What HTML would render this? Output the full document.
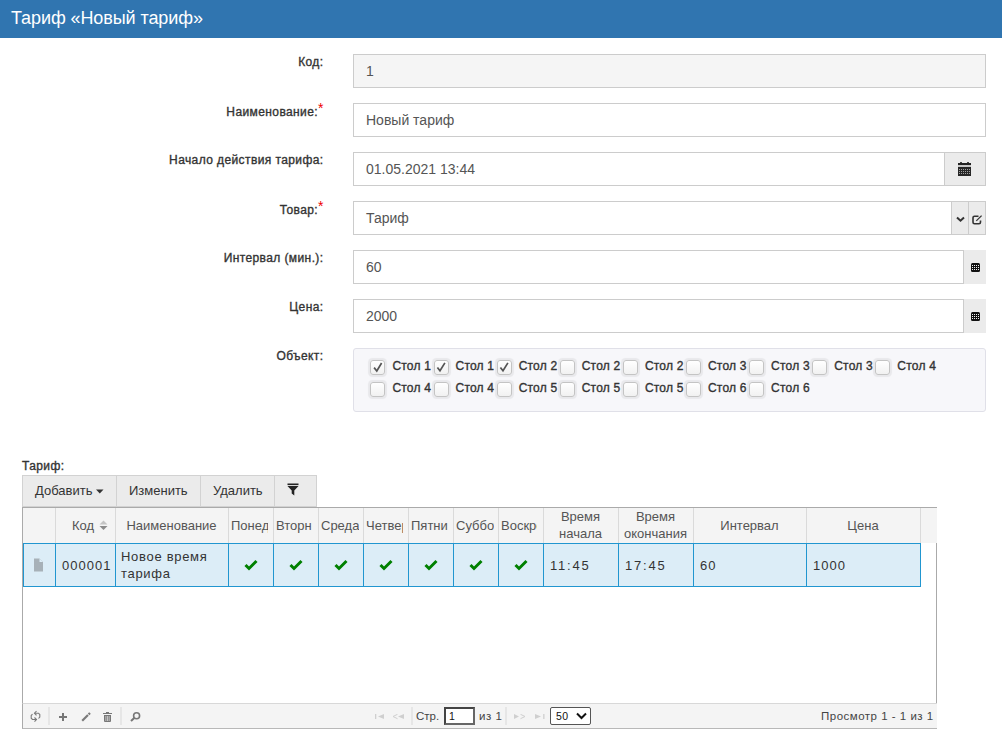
<!DOCTYPE html>
<html><head><meta charset="utf-8">
<style>
*{box-sizing:border-box;margin:0;padding:0}
html,body{width:1002px;height:749px;overflow:hidden;background:#fff;font-family:"Liberation Sans",sans-serif;color:#333}
.abs{position:absolute}
#hdr{left:0;top:0;width:1002px;height:38px;background:#3075b0;color:#fff;font-size:18px;line-height:36px;letter-spacing:-0.09px;padding-left:11px;}
.lbl{position:absolute;right:678.5px;font-size:12px;color:#333;letter-spacing:0.4px;-webkit-text-stroke:0.35px #333;white-space:nowrap;line-height:14px}
.req{color:#e00;-webkit-text-stroke:0;letter-spacing:0;position:relative;top:-3px;font-size:14px;margin-left:0px}
.inp{position:absolute;left:353px;height:34px;border:1px solid #ccc;background:#fff;font-size:14px;color:#555;padding-left:12px;line-height:32px}
.addon{position:absolute;height:34px;background:#ebebeb;border:1px solid #ccc}
.panel{position:absolute;left:353px;top:348px;width:633px;height:64px;background:#f7f7fa;border:1px solid #e0e0e8;border-radius:3px}
.cb{position:absolute;width:15px;height:15px;border:1px solid #c4c4c4;border-radius:3px;background:linear-gradient(#fff,#f1f1f1);box-shadow:0 0 1px 1.5px rgba(0,0,0,0.06)}
.cbt{position:absolute;font-size:12px;color:#333;letter-spacing:0.2px;-webkit-text-stroke:0.35px #333;line-height:12px;white-space:nowrap}
.tb{position:absolute;top:475px;height:32px;background:#ebebeb;border:1px solid #d2d2d2;font-size:13px;color:#333;line-height:30px;white-space:nowrap}
.gh{position:absolute;top:508px;height:35px;font-size:13px;color:#555;text-align:center;overflow:hidden;white-space:nowrap;line-height:35px}
.gc{position:absolute;top:543px;height:44px;background:#dcecf6;border:1px solid #2a93c8;border-left:none;font-size:12px;color:#333;overflow:hidden;white-space:nowrap}
.gh2{position:absolute;top:508px;height:35px;font-size:13px;color:#555;text-align:center;line-height:16.5px;padding-top:1px;white-space:nowrap;overflow:hidden}
.gr{position:absolute;font-size:13px;color:#333;letter-spacing:0.7px;white-space:nowrap;line-height:14px}
.ft{position:absolute;font-size:11.5px;color:#444;line-height:13px;white-space:nowrap}
.gfoot{position:absolute;left:22px;top:703px;width:915px;height:26px;background:#f4f4f4;border-top:1px solid #d8d8d8;border-bottom:1px solid #b8b8b8;border-left:1px solid #aaa}
</style></head><body>
<div id="hdr" class="abs">Тариф «Новый тариф»</div>

<div class="lbl" style="top:55px">Код:</div>
<div class="inp" style="top:54px;width:633px;background:#f5f5f5">1</div>

<div class="lbl" style="top:104px">Наименование:<span class="req">*</span></div>
<div class="inp" style="top:103px;width:633px">Новый тариф</div>

<div class="lbl" style="top:153px">Начало действия тарифа:</div>
<div class="inp" style="top:152px;width:592px">01.05.2021 13:44</div>
<div class="addon" style="left:944px;top:152px;width:42px"></div>

<div class="lbl" style="top:202px">Товар:<span class="req">*</span></div>
<div class="inp" style="top:201px;width:599px">Тариф</div>
<div class="addon" style="left:951px;top:201px;width:18px"></div>
<div class="addon" style="left:968px;top:201px;width:18px"></div>

<div class="lbl" style="top:251px">Интервал (мин.):</div>
<div class="inp" style="top:250px;width:611px">60</div>
<div class="addon" style="left:964px;top:250px;width:22px;border:none"></div>

<div class="lbl" style="top:300px">Цена:</div>
<div class="inp" style="top:299px;width:611px">2000</div>
<div class="addon" style="left:964px;top:299px;width:22px;border:none"></div>

<div class="lbl" style="top:349px">Объект:</div>
<div class="panel"></div>
<div class="cb" style="left:370.40px;top:360px"><svg width="13" height="13" viewBox="0 0 13 13" style="position:absolute;left:0;top:0"><path d="M3.1,6.6 L5.8,10 L10.6,2" fill="none" stroke="#555" stroke-width="1.7"/></svg></div><div class="cbt" style="left:392.40px;top:360px">Стол 1</div><div class="cb" style="left:433.52px;top:360px"><svg width="13" height="13" viewBox="0 0 13 13" style="position:absolute;left:0;top:0"><path d="M2.4,6.4 L5,9.8 L9.9,1.9" fill="none" stroke="#555" stroke-width="1.7"/></svg></div><div class="cbt" style="left:455.52px;top:360px">Стол 1</div><div class="cb" style="left:496.64px;top:360px"><svg width="13" height="13" viewBox="0 0 13 13" style="position:absolute;left:0;top:0"><path d="M2.4,6.4 L5,9.8 L9.9,1.9" fill="none" stroke="#555" stroke-width="1.7"/></svg></div><div class="cbt" style="left:518.64px;top:360px">Стол 2</div><div class="cb" style="left:559.76px;top:360px"></div><div class="cbt" style="left:581.76px;top:360px">Стол 2</div><div class="cb" style="left:622.88px;top:360px"></div><div class="cbt" style="left:644.88px;top:360px">Стол 2</div><div class="cb" style="left:686.00px;top:360px"></div><div class="cbt" style="left:708.00px;top:360px">Стол 3</div><div class="cb" style="left:749.12px;top:360px"></div><div class="cbt" style="left:771.12px;top:360px">Стол 3</div><div class="cb" style="left:812.24px;top:360px"></div><div class="cbt" style="left:834.24px;top:360px">Стол 3</div><div class="cb" style="left:875.36px;top:360px"></div><div class="cbt" style="left:897.36px;top:360px">Стол 4</div><div class="cb" style="left:370.40px;top:382px"></div><div class="cbt" style="left:392.40px;top:382px">Стол 4</div><div class="cb" style="left:433.52px;top:382px"></div><div class="cbt" style="left:455.52px;top:382px">Стол 4</div><div class="cb" style="left:496.64px;top:382px"></div><div class="cbt" style="left:518.64px;top:382px">Стол 5</div><div class="cb" style="left:559.76px;top:382px"></div><div class="cbt" style="left:581.76px;top:382px">Стол 5</div><div class="cb" style="left:622.88px;top:382px"></div><div class="cbt" style="left:644.88px;top:382px">Стол 5</div><div class="cb" style="left:686.00px;top:382px"></div><div class="cbt" style="left:708.00px;top:382px">Стол 6</div><div class="cb" style="left:749.12px;top:382px"></div><div class="cbt" style="left:771.12px;top:382px">Стол 6</div>
<svg class="abs" style="left:958px;top:161px" width="14" height="16" viewBox="0 0 14 16" shape-rendering="crispEdges">
<rect x="2" y="1" width="2" height="1" fill="#444"/><rect x="9" y="1" width="2" height="1" fill="#444"/>
<rect x="0" y="2" width="13" height="2" fill="#222"/>
<rect x="0" y="4" width="13" height="2" fill="#c8c8c8"/>
<rect x="0" y="6" width="13" height="9" fill="#262626"/>
<g fill="#a0a0a0"><rect x="1" y="8" width="1" height="1"/><rect x="3" y="8" width="1" height="1"/><rect x="5" y="8" width="1" height="1"/><rect x="7" y="8" width="1" height="1"/><rect x="9" y="8" width="1" height="1"/><rect x="11" y="8" width="1" height="1"/><rect x="1" y="10" width="1" height="1"/><rect x="3" y="10" width="1" height="1"/><rect x="5" y="10" width="1" height="1"/><rect x="7" y="10" width="1" height="1"/><rect x="9" y="10" width="1" height="1"/><rect x="11" y="10" width="1" height="1"/><rect x="1" y="12" width="1" height="1"/><rect x="3" y="12" width="1" height="1"/><rect x="5" y="12" width="1" height="1"/><rect x="7" y="12" width="1" height="1"/><rect x="9" y="12" width="1" height="1"/><rect x="11" y="12" width="1" height="1"/></g>
</svg>
<svg class="abs" style="left:955px;top:214px" width="12" height="10" viewBox="0 0 12 10">
<polyline points="2,3.4 5.5,6.7 9,3.4" fill="none" stroke="#333" stroke-width="2"/>
</svg>
<svg class="abs" style="left:971px;top:214px" width="13" height="12" viewBox="0 0 13 12">
<path d="M7.5,2.2 H3.5 Q2,2.2 2,3.7 V8.3 Q2,9.8 3.5,9.8 H8 Q9.5,9.8 9.5,8.3 V6.5" fill="none" stroke="#333" stroke-width="1.6"/>
<path d="M5.3,6.9 L10.6,1.6" stroke="#333" stroke-width="1.3"/>
</svg>
<svg class="abs" style="left:971px;top:263px" width="9" height="9" viewBox="0 0 9 9" shape-rendering="crispEdges">
<rect x="0" y="0" width="9" height="9" rx="1.5" fill="#111" shape-rendering="auto"/>
<g fill="#f0f0f0"><rect x="1" y="2" width="1" height="1"/><rect x="3" y="2" width="1" height="1"/><rect x="5" y="2" width="1" height="1"/><rect x="7" y="2" width="1" height="1"/>
<rect x="1" y="4" width="1" height="1"/><rect x="3" y="4" width="1" height="1"/><rect x="5" y="4" width="1" height="1"/><rect x="7" y="4" width="1" height="1"/>
<rect x="1" y="6" width="1" height="1"/><rect x="3" y="6" width="1" height="1"/><rect x="5" y="6" width="1" height="1"/><rect x="7" y="6" width="1" height="1"/></g>
</svg>
<svg class="abs" style="left:971px;top:312px" width="9" height="9" viewBox="0 0 9 9" shape-rendering="crispEdges">
<rect x="0" y="0" width="9" height="9" rx="1.5" fill="#111" shape-rendering="auto"/>
<g fill="#f0f0f0"><rect x="1" y="2" width="1" height="1"/><rect x="3" y="2" width="1" height="1"/><rect x="5" y="2" width="1" height="1"/><rect x="7" y="2" width="1" height="1"/>
<rect x="1" y="4" width="1" height="1"/><rect x="3" y="4" width="1" height="1"/><rect x="5" y="4" width="1" height="1"/><rect x="7" y="4" width="1" height="1"/>
<rect x="1" y="6" width="1" height="1"/><rect x="3" y="6" width="1" height="1"/><rect x="5" y="6" width="1" height="1"/><rect x="7" y="6" width="1" height="1"/></g>
</svg>


<div class="lbl" style="top:459px;left:22px;right:auto">Тариф:</div>
<div class="tb" style="left:22px;width:95px;padding-left:12px">Добавить</div>
<div class="tb" style="left:116px;width:85px;padding-left:12px">Изменить</div>
<div class="tb" style="left:200px;width:75px;padding-left:12px">Удалить</div>
<div class="tb" style="left:274px;width:43px"></div>
<svg class="abs" style="left:96px;top:489px" width="8" height="5" viewBox="0 0 8 5"><path d="M0,0.5 H7.5 L3.75,4.5Z" fill="#333"/></svg>
<svg class="abs" style="left:287px;top:483px" width="13" height="13" viewBox="0 0 13 13"><rect x="0.5" y="0.5" width="11" height="1.6" fill="#222"/><path d="M0.5,3 H11.5 L7.3,7.6 V12.5 L4.7,10.6 V7.6Z" fill="#222"/></svg>



<div class="abs" style="left:22px;top:507px;width:915px;height:197px;border:1px solid #aaa;border-bottom:none;background:#fff"></div>
<div class="abs" style="left:23px;top:508px;width:914px;height:35px;background:#f4f4f4"></div>
<div class="abs" style="left:55px;top:508px;width:1px;height:35px;background:#dadada"></div><div class="abs" style="left:115px;top:508px;width:1px;height:35px;background:#dadada"></div><div class="abs" style="left:228px;top:508px;width:1px;height:35px;background:#dadada"></div><div class="abs" style="left:273px;top:508px;width:1px;height:35px;background:#dadada"></div><div class="abs" style="left:318px;top:508px;width:1px;height:35px;background:#dadada"></div><div class="abs" style="left:363px;top:508px;width:1px;height:35px;background:#dadada"></div><div class="abs" style="left:408px;top:508px;width:1px;height:35px;background:#dadada"></div><div class="abs" style="left:453px;top:508px;width:1px;height:35px;background:#dadada"></div><div class="abs" style="left:498px;top:508px;width:1px;height:35px;background:#dadada"></div><div class="abs" style="left:543px;top:508px;width:1px;height:35px;background:#dadada"></div><div class="abs" style="left:618px;top:508px;width:1px;height:35px;background:#dadada"></div><div class="abs" style="left:693px;top:508px;width:1px;height:35px;background:#dadada"></div><div class="abs" style="left:806px;top:508px;width:1px;height:35px;background:#dadada"></div><div class="abs" style="left:920px;top:508px;width:1px;height:35px;background:#dadada"></div><div class="gh" style="left:55px;width:60px;padding-left:17px;text-align:left">Код</div><div class="gh" style="left:115px;width:113px">Наименование</div><div class="gh" style="left:229px;width:39px;text-align:left;padding-left:2px">Понедельник</div><div class="gh" style="left:274px;width:38px;text-align:left;padding-left:2px">Вторник</div><div class="gh" style="left:319px;width:40px;text-align:left;padding-left:2px">Среда</div><div class="gh" style="left:364px;width:39px;text-align:left;padding-left:2px">Четверг</div><div class="gh" style="left:409px;width:39px;text-align:left;padding-left:2px">Пятница</div><div class="gh" style="left:454px;width:40px;text-align:left;padding-left:2px">Суббота</div><div class="gh" style="left:499px;width:38px;text-align:left;padding-left:2px">Воскресенье</div><div class="gh2" style="left:543px;width:75px">Время<br>начала</div><div class="gh2" style="left:618px;width:75px">Время<br>окончания</div><div class="gh" style="left:693px;width:113px">Интервал</div><div class="gh" style="left:806px;width:114px">Цена</div><svg class="abs" style="left:99px;top:520px" width="9" height="11" viewBox="0 0 9 11"><path d="M0.5,4.5 L4.5,0.5 L8.5,4.5Z" fill="#c4c4c4"/><path d="M0.5,6 L4.5,10 L8.5,6Z" fill="#8a8a8a"/></svg><div class="abs" style="left:23px;top:543px;width:898px;height:44px;background:#dcedf7;border:1px solid #2196d0"></div><div class="abs" style="left:55px;top:544px;width:1px;height:42px;background:#2196d0"></div><div class="abs" style="left:115px;top:544px;width:1px;height:42px;background:#2196d0"></div><div class="abs" style="left:228px;top:544px;width:1px;height:42px;background:#2196d0"></div><div class="abs" style="left:273px;top:544px;width:1px;height:42px;background:#2196d0"></div><div class="abs" style="left:318px;top:544px;width:1px;height:42px;background:#2196d0"></div><div class="abs" style="left:363px;top:544px;width:1px;height:42px;background:#2196d0"></div><div class="abs" style="left:408px;top:544px;width:1px;height:42px;background:#2196d0"></div><div class="abs" style="left:453px;top:544px;width:1px;height:42px;background:#2196d0"></div><div class="abs" style="left:498px;top:544px;width:1px;height:42px;background:#2196d0"></div><div class="abs" style="left:543px;top:544px;width:1px;height:42px;background:#2196d0"></div><div class="abs" style="left:618px;top:544px;width:1px;height:42px;background:#2196d0"></div><div class="abs" style="left:693px;top:544px;width:1px;height:42px;background:#2196d0"></div><div class="abs" style="left:806px;top:544px;width:1px;height:42px;background:#2196d0"></div><svg class="abs" style="left:33px;top:558px" width="11" height="14" viewBox="0 0 11 14"><path d="M1,0.5 H6.5 L10,4 V13.5 H1Z" fill="#a7b1b8"/><path d="M6.5,0.5 V4 H10" fill="#dcedf7"/></svg><div class="gr" style="left:62px;top:559px;letter-spacing:1px">000001</div><div class="gr" style="left:121px;top:548px;line-height:17px">Новое время<br>тарифа</div><svg class="abs" style="left:244px;top:558px" width="14" height="13" viewBox="0 0 14 13"><path d="M1.5,7 L5,10.5 L12.5,3" fill="none" stroke="#008000" stroke-width="3"/></svg><svg class="abs" style="left:289px;top:558px" width="14" height="13" viewBox="0 0 14 13"><path d="M1.5,7 L5,10.5 L12.5,3" fill="none" stroke="#008000" stroke-width="3"/></svg><svg class="abs" style="left:334px;top:558px" width="14" height="13" viewBox="0 0 14 13"><path d="M1.5,7 L5,10.5 L12.5,3" fill="none" stroke="#008000" stroke-width="3"/></svg><svg class="abs" style="left:379px;top:558px" width="14" height="13" viewBox="0 0 14 13"><path d="M1.5,7 L5,10.5 L12.5,3" fill="none" stroke="#008000" stroke-width="3"/></svg><svg class="abs" style="left:424px;top:558px" width="14" height="13" viewBox="0 0 14 13"><path d="M1.5,7 L5,10.5 L12.5,3" fill="none" stroke="#008000" stroke-width="3"/></svg><svg class="abs" style="left:469px;top:558px" width="14" height="13" viewBox="0 0 14 13"><path d="M1.5,7 L5,10.5 L12.5,3" fill="none" stroke="#008000" stroke-width="3"/></svg><svg class="abs" style="left:514px;top:558px" width="14" height="13" viewBox="0 0 14 13"><path d="M1.5,7 L5,10.5 L12.5,3" fill="none" stroke="#008000" stroke-width="3"/></svg><div class="gr" style="left:550px;top:559px;letter-spacing:1.8px">11:45</div><div class="gr" style="left:625px;top:559px;letter-spacing:1.8px">17:45</div><div class="gr" style="left:700px;top:559px;letter-spacing:1px">60</div><div class="gr" style="left:813px;top:559px;letter-spacing:1px">1000</div><div class="gfoot"></div>
<div class="abs" style="left:48px;top:707px;width:2px;height:18px;background:#e6e6e6"></div>
<div class="abs" style="left:120px;top:707px;width:2px;height:18px;background:#e6e6e6"></div>
<div class="abs" style="left:411px;top:707px;width:2px;height:18px;background:#e6e6e6"></div>
<div class="abs" style="left:505px;top:707px;width:2px;height:18px;background:#e6e6e6"></div>
<svg class="abs" style="left:30px;top:710px" width="12" height="13" viewBox="0 0 12 13" fill="none" stroke="#7a7a7a" stroke-width="1.1">
<path d="M6.5,1.2 L4.5,3.2 L6.5,5.3"/><path d="M4.5,3.2 H8.5 L9.8,4.5 V7 L8.5,8.5"/>
<path d="M2.5,4.2 L1.2,5.5 V8.2 L2.5,9.5 H6.5"/><path d="M4.5,7.5 L6.5,9.5 L4.5,11.6"/>
</svg>
<svg class="abs" style="left:59px;top:713px" width="8" height="8" viewBox="0 0 8 8"><rect x="3" y="0" width="2" height="8" fill="#767676"/><rect x="0" y="3" width="8" height="2" fill="#767676"/></svg>
<svg class="abs" style="left:81px;top:712px" width="10" height="10" viewBox="0 0 10 10"><path d="M1.2,8.8 L7,3" stroke="#7a7a7a" stroke-width="2.2"/><path d="M7.6,2.4 L9,1" stroke="#7a7a7a" stroke-width="2.2"/></svg>
<svg class="abs" style="left:103px;top:712px" width="9" height="10" viewBox="0 0 9 10"><rect x="0" y="1" width="9" height="1" fill="#777"/><rect x="3" y="0" width="3" height="1" fill="#777"/><path d="M1,3 H8 V9 Q8,10 7,10 H2 Q1,10 1,9Z" fill="#777"/><rect x="2.5" y="4" width="0.8" height="5" fill="#d8d8d8"/><rect x="4.1" y="4" width="0.8" height="5" fill="#d8d8d8"/><rect x="5.7" y="4" width="0.8" height="5" fill="#d8d8d8"/></svg>
<svg class="abs" style="left:130px;top:712px" width="11" height="10" viewBox="0 0 11 10"><circle cx="6.6" cy="3.8" r="3" fill="none" stroke="#777" stroke-width="1.6"/><path d="M1,9 L4.5,5.8" stroke="#777" stroke-width="2"/></svg>
<svg class="abs" style="left:375px;top:714px" width="10" height="6" viewBox="0 0 10 6"><rect x="0" y="0" width="1.3" height="5" fill="#cfcfcf"/><path d="M9,0 V5 L3,2.5Z" fill="#cfcfcf"/></svg>
<svg class="abs" style="left:392px;top:714px" width="13" height="6" viewBox="0 0 13 6"><path d="M5.5,0.3 L1,2.5 L5.5,4.7" fill="none" stroke="#cfcfcf" stroke-width="1"/><path d="M12,0 V5 L6,2.5Z" fill="#cfcfcf"/></svg>
<div class="ft" style="left:416px;top:710px">Стр.</div>
<div class="abs" style="left:444px;top:707px;width:31px;height:18px;border:2px solid #444;border-right-color:#666;border-bottom-color:#666;background:#fff;font-size:10.5px;line-height:14px;padding-left:3px;color:#111">1</div>
<div class="ft" style="left:479px;top:710px;letter-spacing:0.5px">из 1</div>
<svg class="abs" style="left:513px;top:714px" width="13" height="6" viewBox="0 0 13 6"><path d="M1,0 V5 L6,2.5Z" fill="#cfcfcf"/><path d="M7.5,0.3 L12,2.5 L7.5,4.7" fill="none" stroke="#cfcfcf" stroke-width="1"/></svg>
<svg class="abs" style="left:535px;top:714px" width="10" height="6" viewBox="0 0 10 6"><path d="M0,0 V5 L6,2.5Z" fill="#cfcfcf"/><rect x="8.2" y="0" width="1.3" height="5" fill="#cfcfcf"/></svg>
<div class="abs" style="left:550px;top:707px;width:41px;height:18px;border:1px solid #555;border-radius:2px;background:#fff;font-size:10.5px;line-height:16px;padding-left:5px;color:#111;letter-spacing:0.3px">50</div>
<svg class="abs" style="left:576px;top:712px" width="11" height="8" viewBox="0 0 11 8"><polyline points="1,1.5 5.5,6 10,1.5" fill="none" stroke="#111" stroke-width="2"/></svg>
<div class="ft" style="left:821px;top:710px;letter-spacing:0.5px">Просмотр 1 - 1 из 1</div>

</body></html>
